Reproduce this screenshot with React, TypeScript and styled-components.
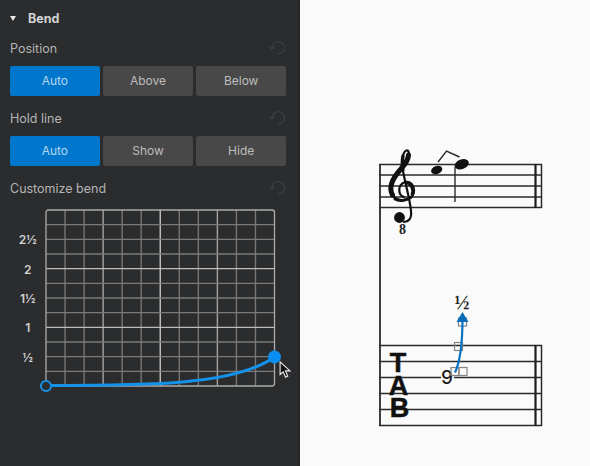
import React from "react";
import styled, { createGlobalStyle } from "styled-components";

const GlobalStyle = createGlobalStyle`
  html, body {
    margin: 0;
    padding: 0;
    height: 466px;
    overflow: hidden;
    background: #fafafa;
    font-family: Inter, "Liberation Sans", sans-serif;
  }
`;

const Page = styled.div`
  display: flex;
  width: 590px;
  height: 466px;
`;

const Panel = styled.aside`
  flex: none;
  width: 276px;
  height: 466px;
  padding: 0 12px 0 10px;
  background: #2b2c2e;
  border-right: 2px solid #242527;
`;

const Header = styled.div`
  display: flex;
  align-items: center;
  height: 36px;
  color: #d4d4d4;
  font-size: 12.5px;
  font-weight: 700;
`;

const Caret = styled.span`
  width: 0;
  height: 0;
  margin: 1px 12px 0 0;
  border-left: 3px solid transparent;
  border-right: 3px solid transparent;
  border-top: 5px solid #e8e8e8;
`;

const LabelRow = styled.div`
  display: flex;
  align-items: center;
  justify-content: space-between;
  height: 24px;
  margin-bottom: 6px;
  color: #b4b4b4;
  font-size: 12.5px;
`;

const ResetIcon = styled.svg`
  width: 18px;
  height: 16px;
  color: #3c3d3f;
`;

const ButtonRow = styled.div`
  display: grid;
  grid-template-columns: repeat(3, 1fr);
  gap: 3.5px;
  margin-bottom: 10px;
`;

const Toggle = styled.button<{ $active?: boolean }>`
  height: 30px;
  padding: 0 0 2px;
  border: none;
  border-radius: 2px;
  background: ${(props) => (props.$active ? "#0077cc" : "#484848")};
  color: ${(props) => (props.$active ? "#b5d6ee" : "#bdbdbd")};
  font-family: inherit;
  font-size: 12px;
`;

const GraphRow = styled.div`
  position: relative;
  display: flex;
  margin-top: 10px;
`;

const YLabels = styled.div`
  width: 35.5px;
  padding-top: 15.4px;
  display: flex;
  flex-direction: column;
`;

const YLabel = styled.span`
  height: 29.33px;
  line-height: 29.33px;
  text-align: center;
  color: #d2d2d2;
  font-size: 12px;
  font-weight: 600;
`;

const Graph = styled.svg`
  display: block;
  overflow: visible;
`;

const Cursor = styled.svg`
  position: absolute;
  left: 269px;
  top: 150.5px;
  width: 13px;
  height: 18px;
`;

const Canvas = styled.main`
  flex: 1;
  min-width: 0;
  background: #fafafa;
`;

const Score = styled.svg`
  display: block;
`;

const ClefEight = styled.text`
  font-family: "Liberation Serif", serif;
  font-size: 14px;
  font-weight: 700;
  fill: #222;
  text-anchor: middle;
`;

const TabLetter = styled.text`
  font-family: "Liberation Sans", sans-serif;
  font-size: 27px;
  font-weight: 700;
  fill: #111;
  stroke: #111;
  stroke-width: 0.5px;
  text-anchor: middle;
`;

const FretNumber = styled.text`
  font-family: Inter, sans-serif;
  font-size: 19px;
  font-weight: 500;
  fill: #1c1c1c;
  text-anchor: middle;
`;

const BendLabel = styled.text`
  font-family: "Liberation Serif", serif;
  font-size: 20px;
  font-weight: 700;
  fill: #1c1c1c;
  text-anchor: middle;
`;

const ResetGlyph = () => (
  <ResetIcon viewBox="0 0 18 16" fill="none" stroke="currentColor" strokeWidth="1.4">
    <path d="M4 8 A6.2 6.2 0 1 1 10 14" />
    <path d="M1.5 6.5 L4 9 L6.5 6.5" />
  </ResetIcon>
);

const GRID_W = 228.5;
const GRID_H = 176;
const CELL_W = GRID_W / 12;
const CELL_H = GRID_H / 12;

const BendGraph = () => (
  <Graph width={GRID_W} height={GRID_H} viewBox={`0 0 ${GRID_W} ${GRID_H}`} fill="none">
    {Array.from({ length: 11 }, (_, i) => i + 1).map((i) => (
      <line
        key={`v${i}`}
        x1={i * CELL_W}
        x2={i * CELL_W}
        y1={0}
        y2={GRID_H}
        stroke={i === 6 ? "#c4c4c4" : i % 3 === 0 ? "#a4a4a4" : "#767676"}
        strokeWidth="1.4"
      />
    ))}
    {Array.from({ length: 11 }, (_, i) => i + 1).map((i) => (
      <line
        key={`h${i}`}
        x1={0}
        x2={GRID_W}
        y1={i * CELL_H}
        y2={i * CELL_H}
        stroke={i === 4 || i === 8 ? "#bcbcbc" : "#7a7a7a"}
        strokeWidth="1.4"
      />
    ))}
    <rect x="0" y="0" width={GRID_W} height={GRID_H} rx="2.5" stroke="#ababab" strokeWidth="1.3" />
    <path d="M0 175.5 C104.5 175.5 189.5 175 228.5 147" stroke="#1492ea" strokeWidth="3" />
    <circle cx="0" cy="176" r="5" fill="#2b2c2e" stroke="#1492ea" strokeWidth="2" />
    <circle cx="228.5" cy="147" r="6.5" fill="#0a8df2" />
  </Graph>
);

const STAFF_TOP = [164.5, 175, 186, 197, 207.5];
const STAFF_TAB = [345.5, 361.5, 377.5, 393.5, 409.5, 425.5];

const BendBox = ({ x, y }: { x: number; y: number }) => (
  <rect x={x} y={y} width="8" height="8" fill="none" stroke="#858585" strokeWidth="1.2" />
);

const ScoreView = () => (
  <Score width="290" height="466" viewBox="300 0 290 466" fill="none">
    {[...STAFF_TOP, ...STAFF_TAB].map((y) => (
      <line key={y} x1="379" x2="542" y1={y} y2={y} stroke="#2a2a2a" strokeWidth="1.4" />
    ))}
    <line x1="380" x2="380" y1="164" y2="426" stroke="#2a2a2a" strokeWidth="1.8" />
    <line x1="535.5" x2="535.5" y1="164" y2="208" stroke="#1c1c1c" strokeWidth="2.2" />
    <line x1="541.5" x2="541.5" y1="164" y2="208" stroke="#2a2a2a" strokeWidth="1.5" />
    <line x1="535.5" x2="535.5" y1="345" y2="426" stroke="#1c1c1c" strokeWidth="2.2" />
    <line x1="541.5" x2="541.5" y1="345" y2="426" stroke="#2a2a2a" strokeWidth="1.5" />

    {/* treble clef */}
    <g stroke="#111" strokeLinecap="round">
      <path
        d="M404 197 C398 195 397 185 405 182 C412 181 416 188 413 195 C410 201 398 202 393 196 C387 188 392 178 399 170 C405 163 410 158 409 153 C408 149 405 150 403.5 154 C401 160 402 168 404 176 C406 186 410 200 411 211 C412 219 408 222 404 222"
        strokeWidth="2.2"
      />
      <path d="M392.5 195 C388 187 393 178 400 170 C405 164 408.5 160 408.5 155" strokeWidth="5" />
      <path d="M395 199 C400 202 408 200 411 197" strokeWidth="3" />
      <path d="M412 194 C414 189 411 184 407 183" strokeWidth="2.8" />
      <path d="M403 156 C402 160 402 165 403 170" strokeWidth="3.2" />
    </g>
    <circle cx="399.5" cy="217.5" r="5.4" fill="#111" />
    <ClefEight x="402.5" y="234">8</ClefEight>

    {/* notes and slur */}
    <ellipse cx="436.7" cy="170" rx="5.8" ry="4" fill="#111" transform="rotate(-20 436.7 170)" />
    <ellipse cx="461.7" cy="164.3" rx="7.4" ry="4.8" fill="#111" transform="rotate(-20 461.7 164.3)" />
    <line x1="455" x2="455" y1="167" y2="202" stroke="#2a2a2a" strokeWidth="1.4" />
    <path d="M438 162 L446.5 151 L459.5 157" stroke="#2a2a2a" strokeWidth="1.4" />

    {/* tab */}
    <TabLetter x="398" y="372">T</TabLetter>
    <TabLetter x="398.5" y="395">A</TabLetter>
    <TabLetter x="399.5" y="417">B</TabLetter>
    <rect x="441" y="369" width="13" height="15" fill="#fafafa" />
    <FretNumber x="447" y="384">9</FretNumber>
    <BendBox x={454.5} y={342.5} />
    <BendBox x={451} y={367.5} />
    <BendBox x={459} y={367.5} />
    <BendBox x={458.5} y={318} />
    <path d="M455 372.5 C460 362 462.5 345 462.5 318" stroke="#0a72c0" strokeWidth="2.2" />
    <path d="M456.5 322 L462.5 312 L468.5 322 Z" fill="#0a6cb8" />
    <BendLabel x="462" y="309">½</BendLabel>
  </Score>
);

const App: React.FC = () => (
  <Page>
    <GlobalStyle />
    <Panel>
      <Header>
        <Caret />
        Bend
      </Header>
      <LabelRow>
        Position
        <ResetGlyph />
      </LabelRow>
      <ButtonRow>
        <Toggle $active>Auto</Toggle>
        <Toggle>Above</Toggle>
        <Toggle>Below</Toggle>
      </ButtonRow>
      <LabelRow>
        Hold line
        <ResetGlyph />
      </LabelRow>
      <ButtonRow>
        <Toggle $active>Auto</Toggle>
        <Toggle>Show</Toggle>
        <Toggle>Hide</Toggle>
      </ButtonRow>
      <LabelRow>
        Customize bend
        <ResetGlyph />
      </LabelRow>
      <GraphRow>
        <YLabels>
          <YLabel>2½</YLabel>
          <YLabel>2</YLabel>
          <YLabel>1½</YLabel>
          <YLabel>1</YLabel>
          <YLabel>½</YLabel>
        </YLabels>
        <BendGraph />
        <Cursor viewBox="0 0 14 20">
          <path
            d="M1 1 L1 15 L4.5 12 L7 18 L9.5 17 L7 11 L12 11 Z"
            fill="#111"
            stroke="#f2f2f2"
            strokeWidth="1.2"
          />
        </Cursor>
      </GraphRow>
    </Panel>
    <Canvas>
      <ScoreView />
    </Canvas>
  </Page>
);

export default App;
